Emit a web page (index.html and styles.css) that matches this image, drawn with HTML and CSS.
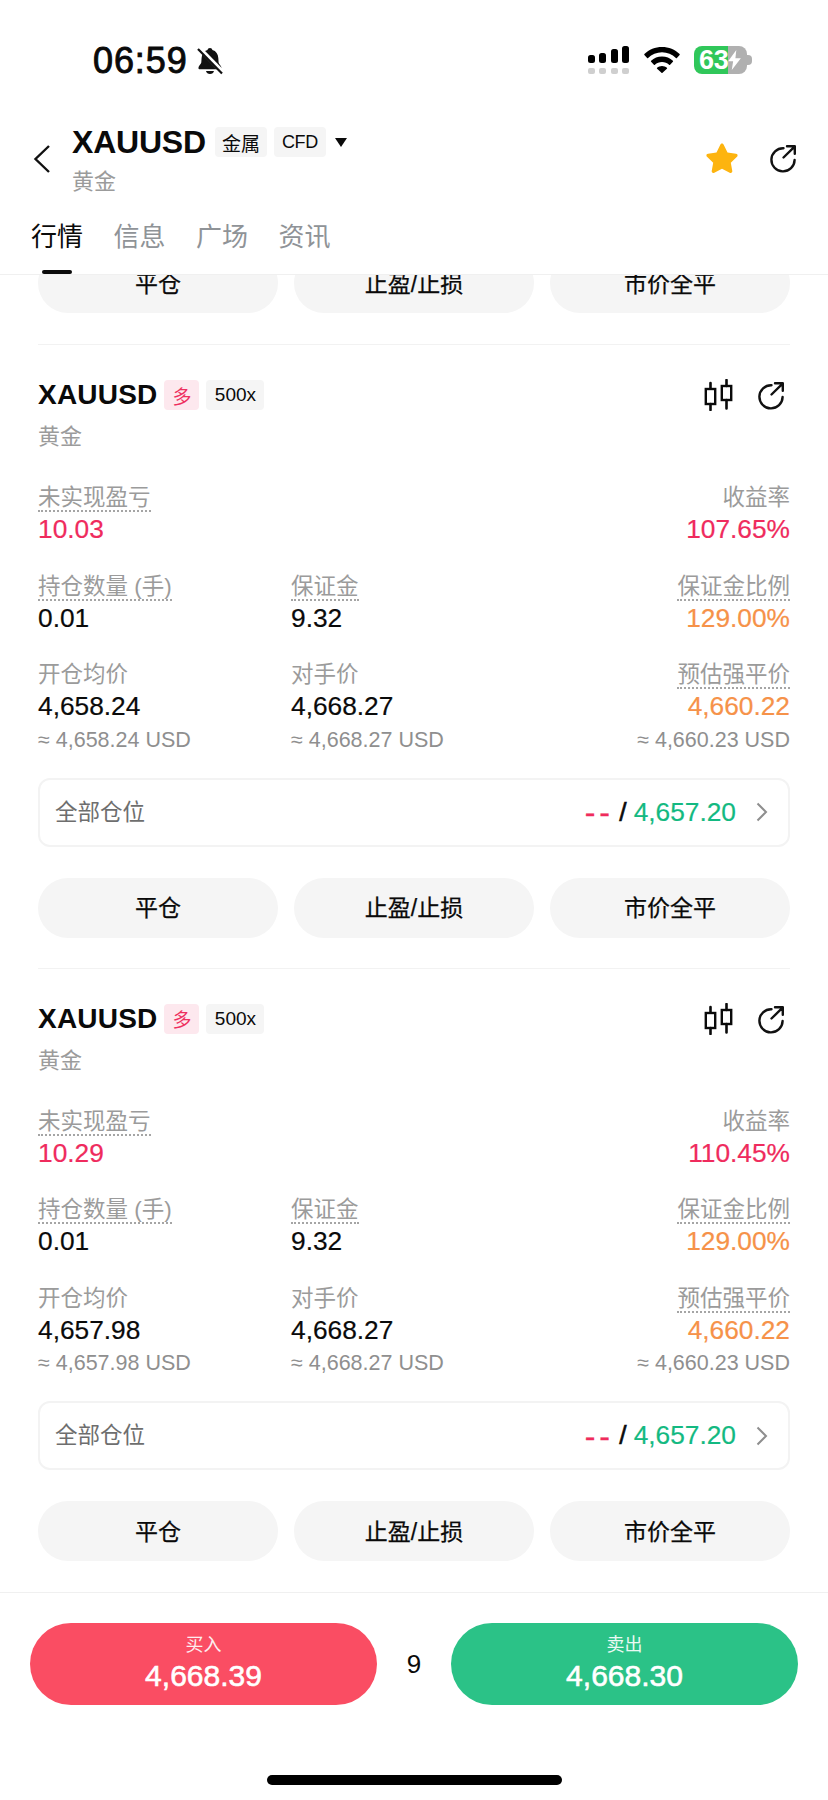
FILE: index.html
```html
<!DOCTYPE html>
<html lang="zh">
<head>
<meta charset="utf-8">
<title>XAUUSD</title>
<link rel="stylesheet" href="styles.css">
</head>
<body>
<svg class="defs" width="0" height="0" aria-hidden="true">
  <symbol id="share" viewBox="0 0 30 30">
    <path d="M15.5 5.2A11.6 11.6 0 1 0 26.6 17" fill="none" stroke="currentColor" stroke-width="2.4" stroke-linecap="round"/>
    <path d="M15.5 14.5 26.6 3.6M19 3.2h7.800v7.600" fill="none" stroke="currentColor" stroke-width="2.4" stroke-linecap="round" stroke-linejoin="round"/>
  </symbol>
  <symbol id="candle" viewBox="0 0 30 32">
    <path d="M7.5 4v5.5M7.5 25v6M23.5 1v6M23.5 21v8.5" fill="none" stroke="currentColor" stroke-width="2.6" stroke-linecap="round"/>
    <rect x="2.8" y="10" width="9.4" height="15" fill="none" stroke="currentColor" stroke-width="2.4"/>
    <rect x="18.8" y="7" width="9.4" height="14" fill="none" stroke="currentColor" stroke-width="2.4"/>
  </symbol>
</svg>
<div class="app">
  <div class="status">
    <div class="status-left">
      <span class="clock">06:59</span>
      <svg class="bell" viewBox="0 0 28 28">
        <path d="M14 1.5c1.3 0 2.2.9 2.4 2 3.7 1 5.7 4 5.9 8l.3 4.5c.1 1.6 2.9 3.4 2.9 5.4 0 .9-.7 1.4-1.6 1.4H4c-.9 0-1.600-.5-1.600-1.400 0-2 2.700-3.800 2.900-5.400l.3-4.500c.2-4 2.200-7 5.900-8 .2-1.100 1.100-2 2.500-2z" fill="#111"/>
        <path d="M10 24.500h8c-.4 1.900-2 3-4 3s-3.600-1.100-4-3z" fill="#111"/>
        <path d="M2.500 1 27 26" stroke="#fff" stroke-width="4.500"/>
        <path d="M2 2.500 26 27" stroke="#111" stroke-width="2.200"/>
      </svg>
    </div>
    <div class="status-right">
      <svg class="signal" viewBox="0 0 41 28">
        <rect x="0" y="9" width="7" height="8" rx="2.500"/>
        <rect x="11" y="7" width="7" height="10" rx="2.500"/>
        <rect x="23" y="3" width="7" height="14" rx="2.500"/>
        <rect x="34" y="0" width="7" height="17" rx="2.500"/>
        <g class="signal-off">
          <rect x="0" y="22" width="7" height="6" rx="2"/>
          <rect x="11" y="22" width="7" height="6" rx="2"/>
          <rect x="23" y="22" width="7" height="6" rx="2"/>
          <rect x="34" y="22" width="7" height="6" rx="2"/>
        </g>
      </svg>
      <svg class="wifi" viewBox="0 0 36 26">
        <path d="M18 0C11.200 0 5 2.600.4 7c-.3.300-.3.700 0 1l2.700 3c.3.300.7.300 1 0C7.800 7.400 12.700 5.300 18 5.300S28.200 7.400 31.900 11c.3.300.7.300 1 0l2.700-3c.3-.3.3-.7 0-1C31 2.600 24.800 0 18 0z"/>
        <path d="M18 9.500c-4.200 0-8 1.600-10.900 4.200-.3.300-.3.700 0 1l2.800 3c.3.300.7.300 1 0 1.900-1.600 4.400-2.600 7.100-2.600s5.200 1 7.100 2.600c.3.300.7.300 1 0l2.800-3c.3-.3.3-.7 0-1C26 11.100 22.200 9.500 18 9.500z"/>
        <path d="M18 19c-1.900 0-3.600.7-4.900 1.800-.3.300-.3.700 0 1l4.400 4c.3.300.7.300 1 0l4.400-4c.3-.3.3-.7 0-1C21.600 19.700 19.900 19 18 19z"/>
      </svg>
      <div class="battery">
        <div class="battery-body"><span class="battery-num">63</span>
          <svg class="bolt" viewBox="0 0 14 22"><path d="M9 0 0 12.500h5.500L4 22l10-13H8z" fill="#fff"/></svg>
        </div>
        <div class="battery-cap"></div>
      </div>
    </div>
  </div>

  <header class="head">
    <svg class="back" viewBox="0 0 18 30"><path d="M16 2 2.500 15 16 28" fill="none" stroke="#111" stroke-width="2.400"/></svg>
    <div class="head-main">
      <div class="head-title">
        <span class="symbol">XAUUSD</span>
        <span class="tag tag-head tag-first">金属</span>
        <span class="tag tag-head tag-cfd">CFD</span>
        <span class="caret"></span>
      </div>
      <div class="name name-head">黄金</div>
    </div>
    <div class="head-icons">
      <svg class="star" viewBox="0 0 32 30"><path d="M16 .5c.8 0 1.300.5 1.700 1.300l3.800 7.800 8.500 1.200c1.600.2 2.100 1.800 1 2.900l-6.200 6 1.500 8.300c.3 1.500-1.300 2.500-2.600 1.800L16 25.800 8.300 29.800c-1.300.7-2.900-.3-2.600-1.800l1.500-8.300-6.200-6c-1.100-1.100-.6-2.700 1-2.900l8.500-1.200 3.800-7.800c.4-.8.900-1.300 1.700-1.300z" fill="#fdb40f"/></svg>
      <svg class="icon-share"><use href="#share"/></svg>
    </div>
  </header>

  <nav class="tabs">
    <span class="tab tab-on">行情</span>
    <span class="tab">信息</span>
    <span class="tab">广场</span>
    <span class="tab">资讯</span>
  </nav>

  <main class="scroll">
    <div class="scroll-inner">
      <div class="actions">
        <span class="btn">平仓</span><span class="btn">止盈/止损</span><span class="btn">市价全平</span>
      </div>

      <section class="card">
        <div class="card-top">
          <div class="card-title">
            <span class="symbol symbol-card">XAUUSD</span>
            <span class="tag tag-long">多</span>
            <span class="tag tag-lev">500x</span>
          </div>
          <div class="card-icons">
            <svg class="icon-candle"><use href="#candle"/></svg>
            <svg class="icon-share-sm"><use href="#share"/></svg>
          </div>
        </div>
        <div class="name">黄金</div>
        <div class="stats">
          <div class="stat"><span class="label dotted">未实现盈亏</span><span class="value red">10.03</span></div>
          <div class="stat"></div>
          <div class="stat end"><span class="label">收益率</span><span class="value red">107.65%</span></div>
          <div class="stat"><span class="label dotted">持仓数量 (手)</span><span class="value">0.01</span></div>
          <div class="stat"><span class="label dotted">保证金</span><span class="value">9.32</span></div>
          <div class="stat end"><span class="label dotted">保证金比例</span><span class="value orange">129.00%</span></div>
          <div class="stat"><span class="label">开仓均价</span><span class="value">4,658.24</span><span class="sub">≈ 4,658.24 USD</span></div>
          <div class="stat"><span class="label">对手价</span><span class="value">4,668.27</span><span class="sub">≈ 4,668.27 USD</span></div>
          <div class="stat end"><span class="label dotted">预估强平价</span><span class="value orange">4,660.22</span><span class="sub">≈ 4,660.23 USD</span></div>
        </div>
        <div class="all">
          <span class="all-label">全部仓位</span>
          <span class="all-right"><span class="red dash">--</span> <span class="slash">/</span> <span class="green">4,657.20</span>
            <svg class="chev" viewBox="0 0 12 20"><path d="M1.500 1.500 10 10l-8.500 8.500" fill="none" stroke="#8e8e8e" stroke-width="2"/></svg>
          </span>
        </div>
        <div class="actions">
          <span class="btn">平仓</span><span class="btn">止盈/止损</span><span class="btn">市价全平</span>
        </div>
      </section>

      <section class="card">
        <div class="card-top">
          <div class="card-title">
            <span class="symbol symbol-card">XAUUSD</span>
            <span class="tag tag-long">多</span>
            <span class="tag tag-lev">500x</span>
          </div>
          <div class="card-icons">
            <svg class="icon-candle"><use href="#candle"/></svg>
            <svg class="icon-share-sm"><use href="#share"/></svg>
          </div>
        </div>
        <div class="name">黄金</div>
        <div class="stats">
          <div class="stat"><span class="label dotted">未实现盈亏</span><span class="value red">10.29</span></div>
          <div class="stat"></div>
          <div class="stat end"><span class="label">收益率</span><span class="value red">110.45%</span></div>
          <div class="stat"><span class="label dotted">持仓数量 (手)</span><span class="value">0.01</span></div>
          <div class="stat"><span class="label dotted">保证金</span><span class="value">9.32</span></div>
          <div class="stat end"><span class="label dotted">保证金比例</span><span class="value orange">129.00%</span></div>
          <div class="stat"><span class="label">开仓均价</span><span class="value">4,657.98</span><span class="sub">≈ 4,657.98 USD</span></div>
          <div class="stat"><span class="label">对手价</span><span class="value">4,668.27</span><span class="sub">≈ 4,668.27 USD</span></div>
          <div class="stat end"><span class="label dotted">预估强平价</span><span class="value orange">4,660.22</span><span class="sub">≈ 4,660.23 USD</span></div>
        </div>
        <div class="all">
          <span class="all-label">全部仓位</span>
          <span class="all-right"><span class="red dash">--</span> <span class="slash">/</span> <span class="green">4,657.20</span>
            <svg class="chev" viewBox="0 0 12 20"><path d="M1.500 1.500 10 10l-8.500 8.500" fill="none" stroke="#8e8e8e" stroke-width="2"/></svg>
          </span>
        </div>
        <div class="actions">
          <span class="btn">平仓</span><span class="btn">止盈/止损</span><span class="btn">市价全平</span>
        </div>
      </section>
    </div>
  </main>

  <footer class="foot">
    <div class="trade">
      <div class="trade-btn buy"><span class="trade-label">买入</span><span class="trade-price">4,668.39</span></div>
      <span class="spread">9</span>
      <div class="trade-btn sell"><span class="trade-label">卖出</span><span class="trade-price">4,668.30</span></div>
    </div>
    <div class="home"></div>
  </footer>
</div>
</body>
</html>
```
FILE: styles.css
```css
* { box-sizing: border-box; }
html, body { margin: 0; padding: 0; background: #fff; }
body { font-family: "Liberation Sans", "Noto Sans CJK SC", sans-serif; color: #0a0a0a; }
.defs { display: block; height: 0; }
.app { width: 828px; height: 1800px; display: flex; flex-direction: column; overflow: hidden; }

/* status bar */
.status { height: 122px; flex: none; display: flex; justify-content: space-between; align-items: flex-start; padding: 46px 76px 0 93px; }
.status-left { display: flex; align-items: center; gap: 8px; height: 29px; }
.clock { font-size: 36px; line-height: 29px; letter-spacing: .9px; -webkit-text-stroke: .9px #0a0a0a; }
.bell { width: 28px; height: 29px; }
.status-right { display: flex; align-items: flex-start; }
.signal { width: 41px; height: 28px; fill: #000; }
.signal-off { fill: #cfcfcf; }
.wifi { width: 36px; height: 26px; margin: 1px 14px 0 15px; fill: #000; }
.battery { display: flex; align-items: center; }
.battery-body { width: 53px; height: 28px; border-radius: 8px; background: linear-gradient(90deg, #30c75a 0 34px, #b0b0b0 34px); display: flex; align-items: center; padding-left: 5px; }
.battery-num { color: #fff; font-size: 27px; font-weight: 700; line-height: 28px; letter-spacing: -.3px; }
.bolt { width: 13px; height: 20px; flex: none; }
.battery-cap { width: 5px; height: 10px; background: #b0b0b0; border-radius: 0 4px 4px 0; }

/* header */
.head { height: 81px; flex: none; display: flex; align-items: flex-start; padding: 0 30px 0 33px; }
.back { width: 18px; height: 30px; margin-top: 22px; flex: none; }
.head-main { margin-left: 21px; flex: 1; }
.head-title { display: flex; align-items: center; height: 32px; margin-top: 4px; }
.symbol { font-size: 32px; font-weight: 700; line-height: 32px; letter-spacing: -.2px; }
.tag { display: inline-flex; align-items: center; justify-content: center; background: #f5f5f5; border-radius: 4px; font-size: 19px; }
.tag-head { height: 30px; width: 52px; margin-left: 7px; }
.tag-first { margin-left: 9px; }
.tag-cfd { font-size: 18px; letter-spacing: -.3px; }
.caret { width: 0; height: 0; margin-left: 9px; border-left: 6.500px solid transparent; border-right: 6.500px solid transparent; border-top: 9px solid #0a0a0a; }
.name { font-size: 22px; line-height: 30px; color: #9b9b9b; }
.name-head { margin-top: 9px; }
.head-icons { display: flex; align-items: center; gap: 30px; margin-top: 21px; }
.star { width: 32px; height: 30px; }
.icon-share { width: 30px; height: 30px; color: #111; }

/* tabs */
.tabs { height: 72px; flex: none; display: flex; gap: 30.500px; padding: 0 0 0 31px; border-bottom: 1px solid #f0f0f0; }
.tab { position: relative; font-size: 26px; line-height: 36px; margin-top: 16px; color: #8f9397; height: 55px; }
.tab-on { color: #0a0a0a; }
.tab-on::after { content: ""; position: absolute; left: 11px; bottom: 0; width: 30px; height: 4px; border-radius: 2px; background: #0a0a0a; }

/* scroll */
.scroll { flex: 1; min-height: 0; overflow: hidden; }
.scroll-inner { margin-top: -22px; padding: 0 38px; }
.actions { display: flex; gap: 16px; }
.btn { flex: 1; height: 60px; padding-bottom: 3px; border-radius: 30px; background: #f5f5f5; display: flex; align-items: center; justify-content: center; font-size: 23px; -webkit-text-stroke: .25px #0a0a0a; }
.card { margin-top: 30px; border-top: 1px solid #f2f2f2; padding-top: 34px; }
.card:first-of-type { margin-top: 31px; }
.card-top { display: flex; justify-content: space-between; align-items: center; height: 32px; }
.card-title { display: flex; align-items: center; }
.symbol-card { font-size: 28px; letter-spacing: .2px; }
.tag-long { height: 30px; width: 35px; margin-left: 7px; background: #fde8ee; color: #ee2f5f; }
.tag-lev { height: 30px; width: 58px; margin-left: 7px; }
.card-icons { display: flex; align-items: center; gap: 23px; }
.icon-candle { width: 30px; height: 32px; color: #0a0a0a; }
.icon-share-sm { width: 30px; height: 30px; color: #111; margin-right: 4px; }
.card > .name { margin-top: 11px; }

.stats { display: grid; grid-template-columns: 253px 1fr 1fr; row-gap: 28.500px; margin-top: 32px; }
.stat { display: flex; flex-direction: column; align-items: flex-start; }
.end { align-items: flex-end; }
.label { font-size: 22.5px; line-height: 27px; color: #9b9b9b; height: 28px; margin-bottom: 2px; }
.dotted { border-bottom: 2px dotted #a5a5a5; }
.value { font-size: 26.300px; line-height: 30px; height: 30px; color: #0a0a0a; -webkit-text-stroke: .2px currentColor; }
.sub { font-size: 21.500px; line-height: 28px; color: #8f8f8f; margin-top: 4.500px; }
.value.red, .red { color: #ef2b5d; }
.value.orange { color: #f69249; }
.green { color: #13b981; }

.all { margin-top: 24px; height: 69px; border: 2px solid #f3f3f3; border-radius: 12px; padding: 0 20px 0 15px; display: flex; align-items: center; justify-content: space-between; }
.all-label { font-size: 22.500px; color: #6e6e6e; line-height: 28px; margin-top: 1px; }
.all-right { display: flex; align-items: center; gap: 7px; font-size: 26.300px; -webkit-text-stroke: .2px currentColor; }
.dash { font-size: 32px; line-height: 30px; letter-spacing: 4px; margin-right: -1.700px; -webkit-text-stroke: .3px currentColor; }
.slash { -webkit-text-stroke: .6px currentColor; }
.chev { width: 12px; height: 20px; margin-left: 13px; }
.card .actions { margin-top: 31px; }

/* footer */
.foot { flex: none; height: 208px; border-top: 1px solid #f0f0f0; padding: 30px 30px 0 30px; display: flex; flex-direction: column; align-items: center; }
.trade { width: 100%; display: flex; align-items: center; justify-content: space-between; }
.trade-btn { width: 347px; height: 82px; border-radius: 41px; display: flex; flex-direction: column; align-items: center; color: #fff; }
.buy { background: #fa4d63; }
.sell { background: #2bc287; }
.trade-label { font-size: 18px; line-height: 24px; margin-top: 10px; opacity: .9; }
.trade-price { font-size: 30px; line-height: 38px; -webkit-text-stroke: .6px #fff; }
.spread { font-size: 26px; }
.home { width: 295px; height: 10px; border-radius: 5px; background: #000; margin-top: 70px; }
```
